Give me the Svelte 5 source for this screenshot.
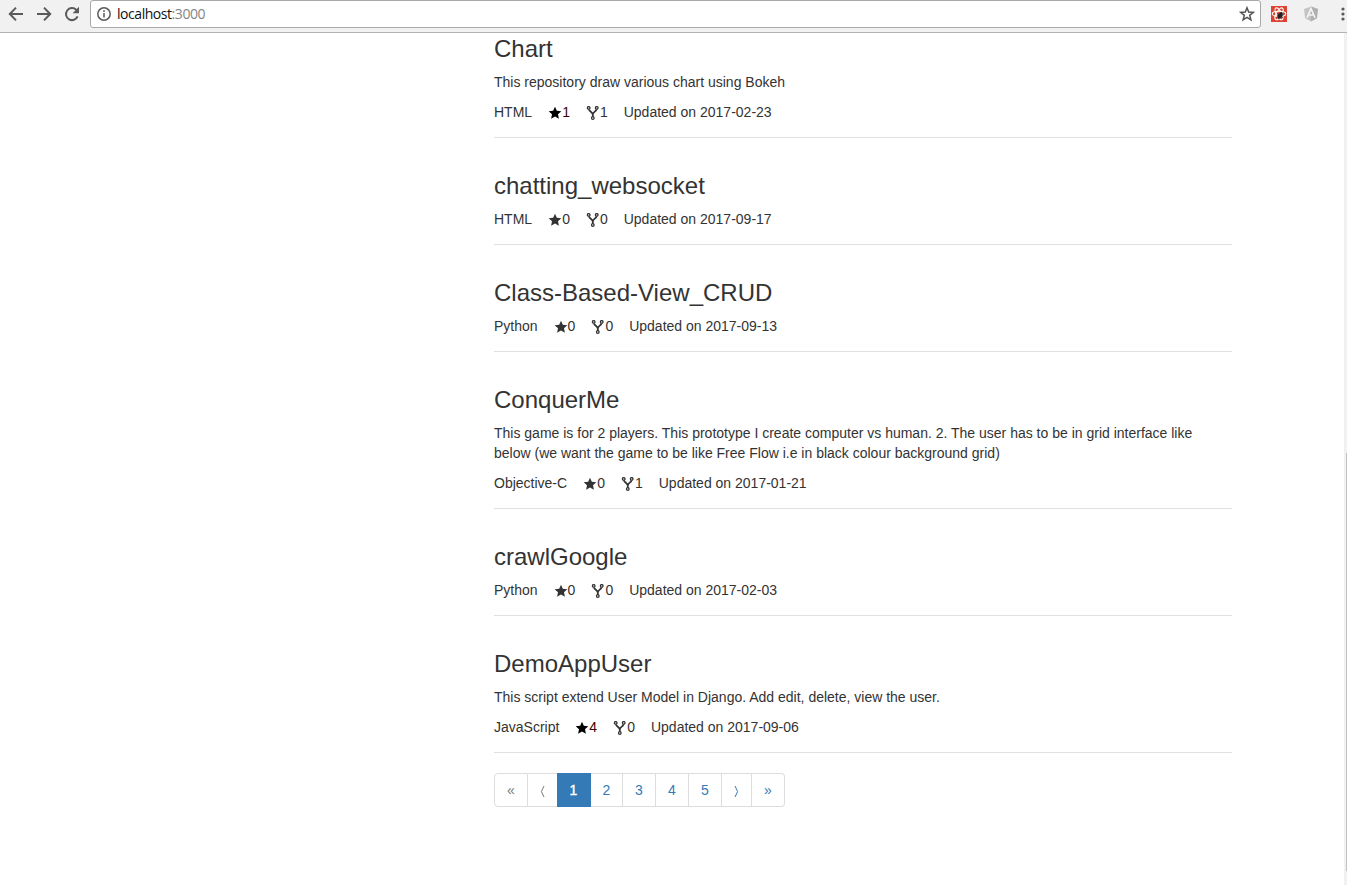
<script>
  const repos = [
    { name: 'Chart', text: 'This repository draw various chart using Bokeh', lang: 'HTML', stars: 1, forks: 1, date: '2017-02-23' },
    { name: 'chatting_websocket', lang: 'HTML', stars: 0, forks: 0, date: '2017-09-17' },
    { name: 'Class-Based-View_CRUD', lang: 'Python', stars: 0, forks: 0, date: '2017-09-13' },
    { name: 'ConquerMe', text: 'This game is for 2 players. This prototype I create computer vs human. 2. The user has to be in grid interface like below (we want the game to be like Free Flow i.e in black colour background grid)', lang: 'Objective-C', stars: 0, forks: 1, date: '2017-01-21' },
    { name: 'crawlGoogle', lang: 'Python', stars: 0, forks: 0, date: '2017-02-03' },
    { name: 'DemoAppUser', text: 'This script extend User Model in Django. Add edit, delete, view the user.', lang: 'JavaScript', stars: 4, forks: 0, date: '2017-09-06' }
  ];
  const pages = [
    { label: '«', width: 34, muted: true },
    { label: '⟨', width: 29, muted: true, angle: 'left' },
    { label: '1', width: 34, active: true },
    { label: '2', width: 32 },
    { label: '3', width: 33 },
    { label: '4', width: 33 },
    { label: '5', width: 33 },
    { label: '⟩', width: 30, angle: 'right' },
    { label: '»', width: 33 }
  ];
</script>

<div class="window">
  <header class="toolbar">
    <nav class="nav">
      <svg width="16" height="16" viewBox="0 0 16 16"><path d="M15 8H2M8 1.6 1.8 8 8 14.4" /></svg>
      <svg width="16" height="16" viewBox="0 0 16 16"><path d="M1 8h13M8 1.6 14.2 8 8 14.4" /></svg>
      <svg width="16" height="16" viewBox="0 0 16 16"><path d="M13.6 10.3A6 6 0 1 1 12.2 3.8L13.5 5" /><path class="solid" d="M15 .8v6.4H8.6z" /></svg>
    </nav>
    <div class="address">
      <svg class="info" width="14" height="14" viewBox="0 0 14 14"><circle cx="7" cy="7" r="6.2" /><path d="M7 6v4.5M7 3.2v1.7" /></svg>
      <span class="url">localhost<span class="port">:3000</span></span>
      <svg class="bookmark" width="16" height="16" viewBox="0 0 16 16"><path d="m8 1.8 1.7 4.3 4.6.3-3.6 2.9 1.2 4.5L8 11.3l-3.9 2.5 1.2-4.5-3.6-2.9 4.6-.3z" /></svg>
    </div>
    <svg class="react" width="16" height="16" viewBox="0 0 16 16">
      <rect width="16" height="16" fill="#db4432" />
      <g fill="none" stroke="#fff" stroke-width="1.1"><ellipse cx="8" cy="7.8" rx="6.8" ry="2.6" /><ellipse cx="8" cy="7.8" rx="6.6" ry="2.6" transform="rotate(60 8 7.8)" /><ellipse cx="8" cy="7.8" rx="6.6" ry="2.6" transform="rotate(120 8 7.8)" /></g>
      <ellipse cx="9" cy="9.8" rx="2.1" ry="3.2" transform="rotate(35 9 9.8)" fill="#222" />
      <circle cx="10.3" cy="7.5" r="1.4" fill="#222" />
      <path d="m6.5 7.5 5.8 4.3M6 10l6.3-1M7.5 13l3.5-5" stroke="#222" stroke-width=".8" />
    </svg>
    <svg class="angular" width="16" height="16" viewBox="0 0 16 16"><path d="m8 .5 7 2.4-1.1 9.3L8 15.5l-5.9-3.3L1 2.9z" fill="#c4c4c4" /><path d="m8 .5 7 2.4-1.1 9.3L8 15.5z" fill="#b0b0b0" /><path d="m4 11.8 4-9.2 4 9.2M5.7 9h4.6" fill="none" stroke="#f4f4f4" stroke-width="1.6" /></svg>
    <svg class="more" width="4" height="14" viewBox="0 0 4 14"><circle cx="2" cy="2" r="1.6" /><circle cx="2" cy="7" r="1.6" /><circle cx="2" cy="12" r="1.6" /></svg>
  </header>

  <div class="view">
    <main>
      {#each repos as repo}
        <article>
          <h3>{repo.name}</h3>
          {#if repo.text}<p>{repo.text}</p>{/if}
          <div class="meta">
            <span>{repo.lang}</span>
            <span class="count" class:starred={repo.stars > 0}>
              <svg width="14" height="14" viewBox="0 0 14 14"><path d="m7 .8 1.8 4 4.5.5-3.3 3 .9 4.4L7 10.5l-3.9 2.2.9-4.4-3.3-3 4.5-.5z" /></svg>{repo.stars}
            </span>
            <span class="count fork">
              <svg width="14" height="14" viewBox="0 0 14 14"><circle cx="2.7" cy="1.9" r="1.3" /><circle cx="10.7" cy="1.9" r="1.3" /><circle cx="6.8" cy="12" r="1.3" /><path d="M3 3.3c.2 2.2 3.8 2.8 3.8 5.4C6.8 6.100 10.300 5.500 10.500 3.300M6.800 7.800v2.900" /></svg>{repo.forks}
            </span>
            <span>Updated on {repo.date}</span>
          </div>
        </article>
      {/each}
      <nav class="pages">
        {#each pages as page}
          <a href="#page" class:active={page.active} class:muted={page.muted} style:width="{page.width}px" aria-label={page.label}>
            {#if page.angle}
              <svg width="5" height="13" viewBox="0 0 5 13"><path d={page.angle === 'left' ? 'M4 1 1.4 6.500 4 12' : 'M1 1l2.600 5.500L1 12'} /></svg>
            {:else}{page.label}{/if}
          </a>
        {/each}
      </nav>
    </main>
    <div class="track"><div class="thumb"></div></div>
  </div>
</div>

<style>
  :global(body) { overflow: hidden; background: #fff; }
  .window { width: 1347px; height: 885px; overflow: hidden; display: flex; flex-direction: column; box-sizing: border-box; color: #333; font: 14px/20px "Liberation Sans", Arial, sans-serif; }
  svg { display: block; flex: none; }
  .toolbar { height: 33px; flex: none; box-sizing: border-box; padding: 0 0 4px 8px; border-bottom: 1px solid #b3b3b3; background: #f1f1f1; display: flex; align-items: center; }
  .nav { display: flex; gap: 12px; width: 82px; flex: none; }
  .nav path { fill: none; stroke: #5a5a5a; stroke-width: 2; }
  .nav .solid { fill: #5a5a5a; stroke: none; }
  .address { width: 1171px; height: 28px; box-sizing: border-box; padding: 0 5px 0 6px; flex: none; display: flex; align-items: center; background: #fff; border: 1px solid #a9a9a9; border-radius: 3px; }
  .info { fill: none; stroke: #5a5a5a; stroke-width: 1.5; }
  .url { margin-left: 6px; flex: 1; font: 14px/20px "Open Sans", sans-serif; letter-spacing: -.45px; color: #111; }
  .port { color: #858585; }
  .bookmark { fill: none; stroke: #555; stroke-width: 1.5; }
  .react { margin-left: 10px; }
  .angular { margin-left: 16px; }
  .more { margin-left: 22px; fill: #5a5a5a; }
  .view { flex: 1; display: flex; justify-content: space-between; min-height: 0; }
  main { width: 738px; margin-left: 494px; padding-top: 3px; }
  article { padding-bottom: 15px; border-bottom: 1px solid #e1e1e1; }
  article + article { padding-top: 35px; }
  h3 { height: 26px; margin: 0 0 10px; font-size: 24px; line-height: 26px; font-weight: 400; }
  p { margin: 0 0 10px; }
  .meta { height: 20px; display: flex; gap: 16px; white-space: nowrap; }
  .count { display: flex; align-items: center; }
  .count svg { margin-top: 1px; fill: currentColor; }
  .fork svg { fill: none; stroke: currentColor; stroke-width: 1.3; }
  .fork path { stroke-width: 1.7; }
  .starred { color: #400000; }
  .starred svg { fill: #000; }
  .pages { display: flex; margin-top: 20px; }
  .pages a { height: 34px; box-sizing: border-box; display: flex; align-items: center; justify-content: center; border: 1px solid #ddd; border-left-width: 0; color: #337ab7; text-decoration: none; }
  .pages a:first-child { border-left-width: 1px; border-radius: 4px 0 0 4px; }
  .pages a:last-child { border-radius: 0 4px 4px 0; }
  .pages a:nth-child(2) { border-right-width: 0; }
  .pages .muted { color: #777; }
  .pages .active { background: #337ab7; border-color: #337ab7; color: #fff; -webkit-text-stroke: .4px #fff; }
  .pages svg { fill: none; stroke: currentColor; stroke-width: 1; margin-top: 2px; }
  .track { width: 3px; background: #f1f1f1; padding-top: 420px; box-sizing: border-box; }
  .thumb { width: 1px; height: 418px; margin-left: 2px; background: #c1c1c1; }
</style>
